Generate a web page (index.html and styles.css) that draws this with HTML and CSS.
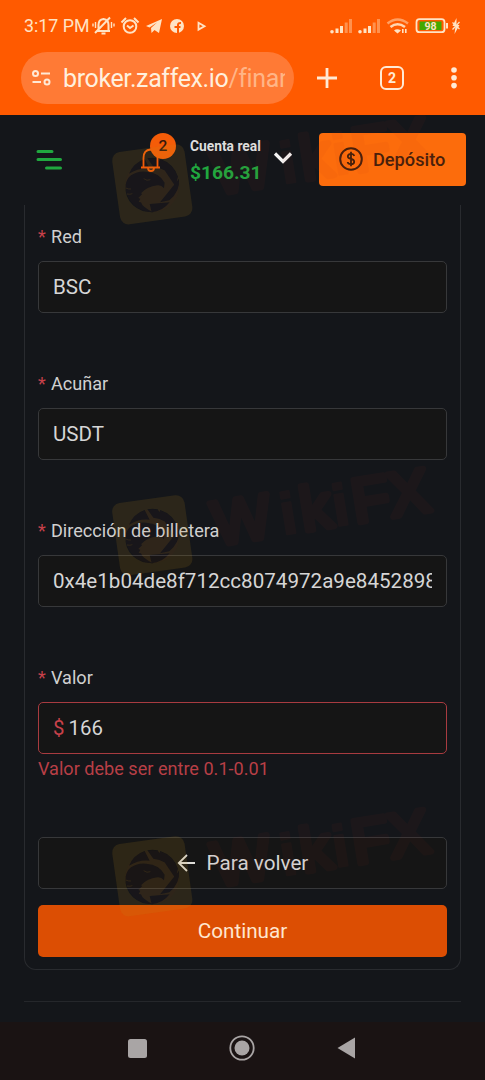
FILE: index.html
```html
<!DOCTYPE html>
<html lang="es">
<head>
<meta charset="utf-8">
<title>Zaffex</title>
<link rel="stylesheet" href="styles.css">
</head>
<body>
<svg class="defs" width="0" height="0" aria-hidden="true">
  <mask id="eagle" maskUnits="userSpaceOnUse" x="0" y="0" width="345" height="130">
    <rect width="345" height="130" fill="#fff"/>
    <g transform="translate(5 34) scale(.3333)">
      <path d="M72 107Q86 74 119 63L134 92Q103 88 72 107ZM127 61Q142 57 158 61L181 98Q163 87 145 86ZM166 63Q205 76 219 116L211 145 162 72ZM222 122Q226 160 193 187L165 193ZM134 198 194 193Q172 221 140 223Z"/>
      <path d="M62 140Q65 122 78 112 98 98 124 101 164 104 179 134L177 151Q169 141 158 142 124 147 108 166L112 168 100 180 106 182 101 192 108 193Q112 208 145 223 108 224 84 202 58 177 62 140Z"/>
      <path fill="none" stroke="#fff" stroke-width="3" d="M62 150q8 4 16 3M66 168q9 2 16-1M116 122q10 8 20 3"/>
    </g>
  </mask>
  <symbol id="mark" viewBox="0 0 345 130">
    <g mask="url(#eagle)"><rect class="mark-tile" transform="translate(52.3 80.3) rotate(-8)" x="-36.500" y="-36.500" width="73" height="73" rx="8.500"/></g>
    <circle class="mark-disc" cx="52.300" cy="81.300" r="27"/>
    <g class="mark-word" transform="translate(116 90.500) rotate(-9.200)">
      <text y="0"><tspan x="0">W</tspan><tspan class="mark-i" x="68">i</tspan><tspan x="89">k</tspan><tspan class="mark-i" x="121">i</tspan><tspan x="141">F</tspan><tspan x="178">X</tspan></text>
    </g>
  </symbol>
</svg>
<div class="screen">
  <header class="browser">
    <div class="status">
      <span class="clock">3:17 PM</span>
      <svg class="status-left" width="120" height="24" viewBox="0 0 120 24" fill="none" stroke="#ffe3c4" stroke-width="2">
        <path d="M7 18h13M8.500 18V12q0-5.500 5-6 5 .5 5 6v6M5 20 20 4.500M11.500 20.500h4" /><path stroke-width="1.400" d="M5.500 9v6M3 10.500v3M21.500 9v6M24 10.500v3"/>
        <circle cx="40" cy="13.500" r="6.300"/><path d="m37 12.500 3 2.500 3.500-2.500M31.500 9.500l4.500-4.500M48.500 9.500 44 5"/>
        <path fill="#ffe3c4" stroke="none" d="m56 13 16-7-3 14-4.500-3-3 3-.5-5 6-5.500-7.500 5z"/>
        <circle cx="87" cy="13" r="7" fill="#ffe3c4" stroke="none"/>
        <path stroke="#ff5a00" stroke-width="2" d="M88 20v-8q0-2.300 3-2M84.500 14h6"/>
        <path stroke-width="1.800" d="m108.500 9.800 6 3.400-6 3.400z"/>
      </svg>
      <svg class="status-right" width="136" height="24" viewBox="0 0 136 24" fill="#ffe3c4">
        <g id="bars"><circle cx="3" cy="18.700" r="1.800"/><path d="M6.500 15.500h3v4.500h-3zM11 13h3v7h-3z"/><path opacity=".4" d="M15.700 9.500h3V20h-3zM20 6h3v14h-3z"/></g>
        <use href="#bars" x="28"/>
        <g fill="none" stroke="#ffe3c4" stroke-width="2.600"><path opacity=".5" d="M58.500 10.500q10-8 20.500 0"/><path d="M61.500 14q7-5.500 14.500 0" opacity=".9"/></g>
        <path d="m65 17.500q3-2.500 7 0L68.500 20.500zM73 16h1.600v4H73zM76 16h1.600v4H76z"/>
        <rect x="87.500" y="6.200" width="28" height="13" rx="3" fill="none" stroke="#ffe3c4" stroke-width="1.800"/>
        <rect x="90.500" y="8.500" width="22" height="8.500" fill="#43a800"/>
        <path d="M117 10h2v5.500h-2z"/>
        <text class="battery" x="101.500" y="16.500" text-anchor="middle">98</text>
        <path d="m127.500 5-4 8h3l-1 8 5-9h-3z"/><path d="m123.500 9.500 7 6.500M130.500 9l-7 7.500" stroke="#ffe3c4" stroke-width="1.200"/>
      </svg>
    </div>
    <div class="toolbar">
      <div class="address">
        <svg class="tune" width="22" height="18" viewBox="0 0 22 18" fill="none" stroke="#ffe9d6" stroke-width="2"><circle cx="4.500" cy="4.500" r="2.500"/><path d="M10 4.500h9M1.500 13H10"/><circle cx="16" cy="13" r="2.500"/></svg>
        <div class="url">broker.zaffex.io<span class="path">/finan</span></div>
      </div>
      <svg class="plus" width="22" height="22" viewBox="0 0 22 22"><path d="M1 11h20M11 1v20" stroke="#ffead5" stroke-width="2.800"/></svg>
      <div class="tabs">2</div>
      <svg class="kebab" width="8" height="22" viewBox="0 0 8 22" fill="#ffead5"><circle cx="4" cy="3" r="2.800"/><circle cx="4" cy="10.800" r="2.800"/><circle cx="4" cy="18.600" r="2.800"/></svg>
    </div>
  </header>

  <div class="appbar">
    <svg class="menu" width="26" height="22" viewBox="0 0 26 22" stroke="#20a73f" stroke-width="3" stroke-linecap="round"><path d="M2 2.500h14M2 10.500h22.500M10.500 19H24.500"/></svg>
    <div class="bell">
      <svg width="22" height="26" viewBox="0 0 22 26" fill="none" stroke="#f45c08" stroke-width="1.800"><path d="M1 20.500h19M3.500 20V11q0-8 7-8.500 7 .5 7 8.500v9M8 21q0 3 3 3t3-3"/></svg>
      <span class="count">2</span>
    </div>
    <div class="account"><span class="kind">Cuenta real</span><span class="balance">$166.31</span></div>
    <svg class="chevron" width="20" height="14" viewBox="0 0 20 14" fill="none" stroke="#f4f4f4" stroke-width="3.200"><path d="m2 2.500 8 8 8-8"/></svg>
    <button class="deposit">
      <svg width="24" height="24" viewBox="0 0 24 24" fill="none" stroke="#48200b" stroke-width="2"><circle cx="12" cy="12" r="10.800"/><path stroke-width="1.800" d="M15.200 9q-.4-2.200-3.200-2.200T8.800 9.200q0 2 3.200 2.700t3.200 2.800q0 2.500-3.200 2.500T8.700 15M12 4.800v14.400"/></svg>
      Depósito
    </button>
  </div>

  <main class="page">
    <section class="card">
      <div class="field"><label class="label"><span class="req">*</span>Red</label><div class="input">BSC</div></div>
      <div class="field"><label class="label"><span class="req">*</span>Acuñar</label><div class="input">USDT</div></div>
      <div class="field"><label class="label"><span class="req">*</span>Dirección de billetera</label><div class="input"><span class="clip">0x4e1b04de8f712cc8074972a9e8452898</span></div></div>
      <div class="field"><label class="label"><span class="req">*</span>Valor</label><div class="input invalid"><span class="prefix">$</span>166</div><p class="error">Valor debe ser entre 0.1-0.01</p></div>
      <div class="actions">
        <button class="btn back"><svg width="18" height="18" viewBox="0 0 18 18" fill="none" stroke="#dedcd8" stroke-width="1.800"><path d="M18 9H1.500M10 1 1.800 9l8.200 8"/></svg>Para volver</button>
        <button class="btn next">Continuar</button>
      </div>
    </section>
    <hr class="rule">
  </main>

  <nav class="sysnav">
    <svg width="485" height="58" viewBox="0 0 485 58" fill="#a9a5a5"><rect x="128" y="17" width="19" height="19" rx="2.500"/><circle cx="242" cy="26" r="7.500"/><circle cx="242" cy="26" r="11.700" fill="none" stroke="#a9a5a5" stroke-width="1.800"/><path d="M337.500 26 355 15.500v21z"/></svg>
  </nav>

  <svg class="mark mark-top"><use href="#mark"/></svg>
  <svg class="mark mark-mid"><use href="#mark"/></svg>
  <svg class="mark mark-low"><use href="#mark"/></svg>
</div>
</body>
</html>
```
FILE: styles.css
```css
* { box-sizing: border-box; }
body { margin: 0; background: #14161a; font-family: Roboto, "Liberation Sans", sans-serif; color: #d6d6d6; }
button { font-family: inherit; border: 0; margin: 0; }
.defs { position: absolute; }
.screen { position: relative; width: 485px; height: 1080px; overflow: hidden; display: flex; flex-direction: column; }

.browser { height: 115px; flex: none; background: #ff5a00; padding-top: 13px; }
.status { height: 24px; display: flex; align-items: center; padding-left: 24px; }
.clock { width: 66px; font-size: 17.8px; line-height: 24px; color: #ffe3c4; white-space: nowrap; padding-top: 2px; }
.status-left { flex: none; }
.status-right { margin-left: 119px; flex: none; }
.battery { font-size: 10.5px; font-weight: 700; }
.toolbar { height: 52px; margin-top: 15px; padding-left: 21px; display: flex; align-items: center; }
.address { width: 273px; height: 52px; border-radius: 26px; background: #ff7a35; display: flex; align-items: center; padding-left: 10px; }
.tune { flex: none; }
.url { margin-left: 10px; width: 222px; overflow: hidden; white-space: nowrap; font-size: 25px; letter-spacing: -.38px; line-height: 40px; padding-top: 1px; color: #fff0de; }
.path { color: #ffb587; }
.plus { margin-left: 22px; }
.tabs { margin-left: 42px; width: 24px; height: 24px; border: 2.6px solid #ffead5; border-radius: 6px; font-size: 14px; font-weight: 700; line-height: 20px; text-align: center; color: #ffead5; }
.kebab { margin-left: 46px; }

.appbar { height: 90px; flex: none; display: flex; align-items: flex-start; padding: 18px 0 0 36px; }
.menu { margin-top: 16px; }
.bell { position: relative; width: 22px; margin: 14px 0 0 78px; }
.bell svg { display: block; }
.count { position: absolute; left: 10px; top: -14px; width: 26px; height: 26px; border-radius: 50%; background: #f45c08; color: #35170b; font-size: 15.5px; font-weight: 500; line-height: 27px; text-align: center; }
.account { width: 84px; margin-left: 28px; display: flex; flex-direction: column; white-space: nowrap; }
.kind { font-size: 13.8px; font-weight: 700; line-height: 26px; color: #dedede; }
.balance { font-size: 19.2px; font-weight: 700; line-height: 28px; color: #20a73f; }
.chevron { margin: 18px 0 0 -1px; }
.deposit { width: 147px; height: 53px; margin-left: 26px; padding: 0 0 1px 20px; border-radius: 4px; background: #fc6c0c; color: #48200b; display: flex; align-items: center; gap: 10px; font-size: 18.2px; font-weight: 500; white-space: nowrap; }

.page { flex: 1; padding: 0 24px; }
.card { height: 765px; border: 1px solid #292b2f; border-top: 0; border-radius: 0 0 12px 12px; padding: 15px 13px 0; }
.field { height: 147px; }
.label { display: flex; height: 32px; line-height: 33px; font-size: 18.1px; color: #d0d0d0; }
.req { width: 13px; color: #c7414a; }
.input { height: 52px; margin-top: 9px; border: 1px solid #37383a; border-radius: 5px; background: #151515; padding: 0 14px 1px; display: flex; align-items: center; font-size: 20.6px; color: #d6d6d6; }
.clip { overflow: hidden; white-space: nowrap; }
.invalid { border-color: #a83b40; font-size: 20.4px; padding-bottom: 0; }
.prefix { color: #c7414a; margin-right: 4px; }
.error { margin: 0; line-height: 29px; font-size: 18.1px; color: #b83f46; }
.actions { display: flex; flex-direction: column; gap: 16px; padding-top: 29px; }
.btn { height: 52px; border-radius: 5px; display: flex; align-items: center; justify-content: center; padding-bottom: 2px; font-size: 20.7px; }
.back { background: #151515; border: 1px solid #37383a; color: #d6d6d6; gap: 12px; }
.next { background: #dc4e03; color: #ffe6cf; }
.rule { height: 1px; border: 0; margin: 31px 0 0; background: #25272b; }
.sysnav { height: 58px; flex: none; background: #1a1313; }
.sysnav svg { display: block; }

.mark { position: absolute; left: 100px; width: 345px; height: 130px; pointer-events: none; }
.mark-top { top: 104px; }
.mark-mid { top: 455px; }
.mark-low { top: 796px; }
.mark-tile { fill: rgba(190, 142, 26, .14); }
.mark-disc { fill: rgba(150, 30, 20, .03); }
.mark-word { opacity: .05; font-family: "Liberation Sans", sans-serif; font-size: 62px; fill: #b4321e; stroke: #b4321e; stroke-width: 6px; stroke-linejoin: round; }
.mark-i { font-size: 58px; font-weight: 700; stroke-width: 2.5px; }
```
